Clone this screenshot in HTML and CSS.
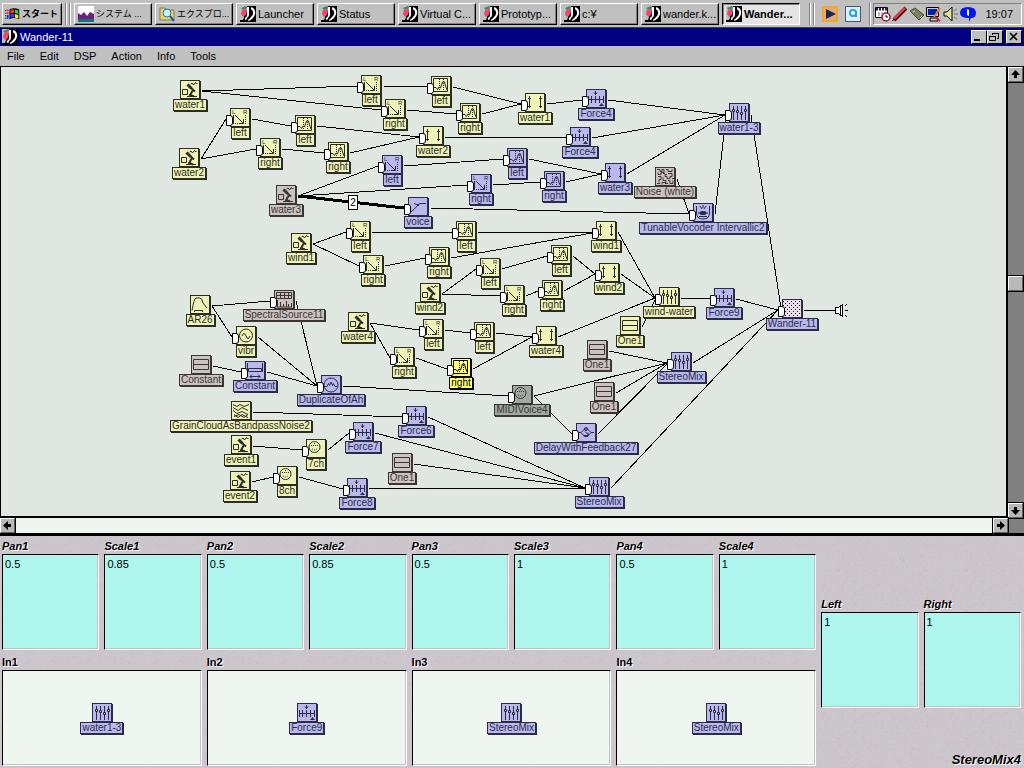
FILE: index.html
```html
<!DOCTYPE html>
<html lang="ja">
<head>
<meta charset="utf-8">
<title>Wander-11</title>
<link rel="stylesheet" href="styles.css">
</head>
<body>
<svg class="defs" aria-hidden="true">
  <defs>
    <symbol id="app" viewBox="0 0 16 16"><path fill="#000" d="M0 0h16v16H0z"/><path fill="#b9c3bd" d="M0 0h7v3L3 14H0z"/><path fill="#41866b" d="M1 2l5-2 2 2-5 2z"/><path fill="#f04468" d="M2 4l4-1 1 2-1 4-3 2-2-3z"/><path d="M11 2q4 2 3 6t-6 6" fill="none" stroke="#fff" stroke-width="2"/><path d="M8 1v8q0 3-3 4" fill="none" stroke="#fff" stroke-width="2"/><path d="M10 2v7q0 3-3 4" fill="none" stroke="#000" stroke-width="2"/></symbol>
    <symbol id="mic" viewBox="0 0 18 17"><path d="M1.500 8.500h5v5h-5zM6 15.500h10M9.500 3l1.500-1 1.500 2 2-2.500 1 1.500 1-1" class="l"/><path d="M6.500 3.500l4 4" class="l w3"/><path d="M10 7l4 3.500M12 9l-3.500 6M9 14l4 1.500" class="l w2"/></symbol>
    <symbol id="pan" viewBox="0 0 18 17"><text x="1" y="5" font-size="6">L</text><text x="12" y="5" font-size="6">R</text><path d="M2.500 6v9M4 6l8 8M12.500 10v4.500H8" class="l"/><path d="M4 14.500h4M14.500 6v9" class="l dot"/></symbol>
    <symbol id="eq" viewBox="0 0 18 17"><path d="M1.500 1.500h14v13h-14zM2 10.500h2l1.500 2L7 10l1.500 1 2-6h2l1 4 1.500 4" class="l"/><path d="M7.500 2v12M11.500 2v12" class="l dot"/></symbol>
    <symbol id="arr" viewBox="0 0 18 17"><path d="M3.500 2v12M14.500 2v12M2 4.500h3M13 4.500h3M2 12.500h3M13 12.500h3" class="l"/></symbol>
    <symbol id="force" viewBox="0 0 18 17"><path d="M8.500 1v4M7 2.500l1.500 2 1.500-2M1 9.500h16M1.500 6v7M4.500 6v7M8.500 6v7M12.500 6v7M16.500 6v7" class="l"/><path d="M12 16l2.500-3 2.500 3z"/></symbol>
    <symbol id="mix" viewBox="0 0 18 17"><path d="M3.500 2v14M7.500 2v14M11.500 2v14M15.500 2v14" class="l"/><path d="M2.500 5.500h2v2h-2zM6.500 6.500h2v2h-2zM10.500 8.500h2v2h-2zM14.500 5.500h2v2h-2z" class="l f"/></symbol>
    <symbol id="voice" viewBox="0 0 18 17"><path d="M1 14.500l4-3 4-4.500 2-1.500h6M5 5.500l5 2" class="l"/><path d="M8 6h2v2H8z"/></symbol>
    <symbol id="noise" viewBox="0 0 18 17"><path d="M1 1.500h3v2h2v-2h2v3H5v2H2v-2M10 1.500h2v2h4v-2M12 5.500h4v3h-2v2h-3v-2H9v-2h2M2 8.500h3v3H3v3M7 9.500v3h3v2H6v2M12 12.500h2v3h3v-3M1 15.500h3M9 15.500h3M16 10.500h2M7 5.500h2" class="l"/></symbol>
    <symbol id="vocoder" viewBox="0 0 18 17"><path d="M2.500 2v7q0 6 6.500 6t6.500-6V2M9 1v3M6 2l2 3M12 2l-2 3M5 12.500h8" class="l"/><ellipse cx="9" cy="9" rx="3.500" ry="2"/><path d="M4 9h10" class="l"/></symbol>
    <symbol id="env" viewBox="0 0 18 17"><path d="M1 14.500q2-12 4-12.500h4q2 0 3 5l4 5M3.500 16v-1.500h8V16" class="l"/></symbol>
    <symbol id="spectral" viewBox="0 0 18 17"><path d="M1.500 1.500h15v6h-15zM2 4.500h14M5.500 2v5M9.500 2v5M13.500 2v5M2.500 9v7M5.500 11v5M8.500 13v3M11.500 10v6M13.500 13v3M16.500 12v4M2 16h15" class="l"/></symbol>
    <symbol id="sine" viewBox="0 0 18 17"><circle cx="9" cy="8.500" r="6.500" class="l"/><path d="M5 9q2-5 4 0t4 0" class="l"/></symbol>
    <symbol id="const" viewBox="0 0 18 17"><path d="M1.500 3.500h15v10h-15zM2 8.500h14" class="l"/></symbol>
    <symbol id="slide" viewBox="0 0 18 17"><path d="M1.500 1v9M16.500 1v9M2.500 6.500h13v3h-13zM4 14.500h10M6 12.500l-2 2 2 2M12 12.500l2 2-2 2" class="l"/></symbol>
    <symbol id="dup" viewBox="0 0 18 17"><circle cx="9" cy="9" r="7" class="l"/><path d="M3 10.500h2l1.500-3 1 2L9 6l1.500 3.500 1-2 1.500 3h2" class="l"/></symbol>
    <symbol id="cloud" viewBox="0 0 18 17"><path d="M1 2.500l4 2 3-2 4 2 5-2M1 5.500l5 3 4-3 6 3M1 8.500l4 3 5-2 6 3M2 12.500l4 3 4-3 6 3M2 14.500l5-2 5 3 4-3" class="l"/></symbol>
    <symbol id="dial" viewBox="0 0 18 17"><circle cx="7.500" cy="7" r="5.500" class="l"/><path d="M4 5.500h8M5 9l2.500 1L10 9M7.500 3v2" class="l dot"/></symbol>
    <symbol id="delay" viewBox="0 0 18 17"><path d="M1 8.500h3l3.500-3.500h3l3.500 3.500h3M4 8.500l3.500 4h3l3.500-4M8 7.500l3 3M7 11.500h4v-3" class="l"/><circle cx="9" cy="5" r="1.500" class="l"/></symbol>
    <symbol id="out" viewBox="0 0 18 17"><path d="M0 0h18v17H0z" fill="#e8dfea"/><path d="M0 1.500h18M0 5.500h18M0 9.500h18M0 13.500h18" class="l chk"/><path d="M2 3.500h18M2 7.500h18M2 11.500h18M2 15.500h18" class="l chk"/></symbol>
  </defs>
</svg>

<header class="taskbar">
  <button class="task start"><svg viewBox="0 0 18 16"><path d="M0 4h4M0 7h4M0 10h4M0 13h4" stroke="#000" stroke-dasharray="1 1"/><path d="M5 3q5-3 11 0v11q-6-3-11 0z"/><path fill="#f33" d="M6 4q2-2 4-1v4H6z"/><path fill="#3c4" d="M11 3l4 1v4l-4-1z"/><path fill="#24f" d="M6 8h4v4H6z"/><path fill="#fe2" d="M11 8l4 1v4l-4-1z"/><path d="M2 4h2M2 7h2" stroke="#f22" stroke-width="2"/><path d="M2 10h2M2 12h2" stroke="#22f" stroke-width="2"/></svg>スタート</button>
  <span class="grip"></span>
  <nav class="tasks" aria-label="タスク">
    <button class="task kana"><svg viewBox="0 0 16 16"><path fill="#fff" d="M0 0h16v16H0z"/><path fill="#70207c" d="M0 7l3 2 3-3 3 4 3-4 4 2v5H0z"/><path fill="#087878" d="M0 13h16v3H0z"/></svg>システム ...</button>
    <button class="task kana"><svg viewBox="0 0 16 16"><path fill="#e8d56b" stroke="#875" d="M1 2h5l2 2h7v10H1z"/><circle cx="8" cy="7" r="4" fill="#bff4fa" stroke="#27a"/><path d="M11 10l4 5" stroke="#14a" stroke-width="2"/></svg>エクスプロ...</button>
    <button class="task"><svg><use href="#app"/></svg>Launcher</button>
    <button class="task"><svg><use href="#app"/></svg>Status</button>
    <button class="task"><svg><use href="#app"/></svg>Virtual C...</button>
    <button class="task"><svg><use href="#app"/></svg>Prototyp...</button>
    <button class="task"><svg><use href="#app"/></svg>c:¥</button>
    <button class="task"><svg><use href="#app"/></svg>wander.k...</button>
    <button class="task active"><svg><use href="#app"/></svg>Wander...</button>
  </nav>
  <span class="grip after"></span>
  <div class="quick">
    <button aria-label="再生"><svg viewBox="0 0 16 16"><path fill="#d8b080" stroke="#f6a623" stroke-width="2" d="M1 1h14v14H1z"/><path fill="#225" d="M4 3l10 5-10 5z"/></svg></button>
    <button aria-label="検索"><svg viewBox="0 0 16 16"><path fill="#d9f0fa" stroke="#456" d="M.5.500h15v15H.5z"/><circle cx="8" cy="7" r="3" fill="#fff" stroke="#28a3dc" stroke-width="2"/><path d="M11 5v6" stroke="#28a3dc" stroke-width="2"/></svg></button>
  </div>
  <span class="grip line"></span>
  <div class="tray">
    <svg viewBox="0 0 16 16"><path fill="#fff" stroke="#000" d="M.5 1.500h12v10H.5z"/><path d="M1 3h11" stroke="#224" stroke-width="3" stroke-dasharray="2 1"/><path d="M3 7h7M3 9h5" stroke="#777" stroke-dasharray="2 1"/><circle cx="11" cy="11" r="4" fill="#fff" stroke="#a01030" stroke-width="1.500"/><path d="M11 9v2h2" stroke="#000" fill="none"/></svg>
    <svg viewBox="0 0 16 16"><path d="M2 14L14 2" stroke="#600" stroke-width="4"/><path d="M2 13L13 2" stroke="#e0405a" stroke-width="2"/><path d="M0 15l3-2" stroke="#000"/></svg>
    <svg viewBox="0 0 16 16"><path fill="#7b8058" stroke="#4a4d30" d="M1 5l5-3 9 7-5 5z"/><path d="M4 6l2-1M11 12l2-2" stroke="#ccc"/></svg>
    <svg viewBox="0 0 16 16"><path fill="#ccc" stroke="#000" d="M.5 1.500h12v9H.5zM4 12h8v3H4z"/><path fill="#0020b0" d="M2 3h9v6H2z"/><path d="M14 2l-6 9" stroke="#e77a20" stroke-width="2"/><path d="M10 12l4 3" stroke="#e22" stroke-width="2"/></svg>
    <svg viewBox="0 0 16 16"><path fill="#e9e08a" stroke="#000" d="M1 6h3l5-5v14l-5-5H1z"/><path d="M11 5l3-2M11 8h4M11 11l3 2" stroke="#777"/></svg>
    <svg viewBox="0 0 16 16"><path fill="#0018e8" d="M8 1q8 0 8 6 0 5-5 5l-2 4v-4Q0 12 0 7q0-6 8-6z"/><path fill="#fff" d="M7 3l2 1v6L7 9z"/></svg>
    <time>19:07</time>
  </div>
</header>

<div class="titlebar">
  <svg><use href="#app"/></svg>
  <h1>Wander-11</h1>
  <div class="winbtns">
    <button aria-label="最小化"><svg viewBox="0 0 12 10"><path d="M2 8h6" stroke="#000" stroke-width="2"/></svg></button><button aria-label="元に戻す"><svg viewBox="0 0 12 10"><path d="M4.500 3V1.500h6v5H9M4 1.500h7" class="k"/><path d="M1.500 4.500h6v4h-6zM1 4.500h7" class="k"/></svg></button><button class="close" aria-label="閉じる"><svg viewBox="0 0 12 10"><path d="M3 1l7 7M10 1L3 8" stroke="#000" stroke-width="1.600"/></svg></button>
  </div>
</div>

<nav class="menubar" aria-label="メニュー">
  <button>File</button><button>Edit</button><button>DSP</button><button>Action</button><button>Info</button><button>Tools</button>
</nav>

<main class="editor">
  <section class="canvas" aria-label="Wander-11">
    <div class="patch">
      <svg class="wires">
        <path d="M202 91L357 86M202 91L381 110M383 86L427 87M407 110L456 114M453 87L521 104M482 114L521 104M547 104L582 100M608 100L725 115M201 159L226 119M201 159L256 149M252 119L291 126M282 149L324 153M317 126L419 137M350 153L419 137M445 137.500L566 138M592 138L725 115M298 196L378 166M298 196L467 185M404 166L503 159M529 159L601 174M493 185L540 182M566 182L601 174M627 174L725 115M430 208L689 214M677 179L689 214M715 214L726 115M751 115L781 308"/>
        <path d="M313 244L346 232M313 244L359 266M372 232.500H452M478 232.500H592M385 266L425 258M451 258L592 233M618 232L655 298M442 294L476 269M442 294L500 296M502 269L547 256M573 256L595 274M526 296L538 291M564 291L595 274M621 274L655 298M370 323L419 330M370 323L390 358M445 330L470 333M496 333L532 337M416 358L447 369M473 369L532 337M558 337L655 298M642 327L655 300M681 298L710 299M736 299L778 310M804 310.500H835"/>
        <path d="M212 306L270 301M212 306L232 337M296 301L317 386M258 337L317 386M213 366L241 372M267 372L317 386M343 386L508 396M534 396L667 363M534 396L572 434M609 351L667 363M616 393L667 363M598 434L667 364M693 363L778 310M253 412L402 417M428 417L585 488M375 433L585 488M414 464L585 488M369 489L585 488M253 446L302 450M328 450L349 433M252 482L273 477M299 477L343 489M611 488L778 310"/>
        <path class="thick" d="M298 196L404 208"/>
        <g><path fill="#fff" d="M835.500 307.500h3l4-3v12l-4-3h-3z"/><path d="M840.500 306v9M845 306l2-2M845 310h3M845 315l2 2"/></g>
      </svg>
      <span class="count">2</span>

      <div class="node" style="left:180px;top:80px"><svg><use href="#mic"/></svg><span>water1</span></div>
      <div class="node in" style="left:230px;top:108px"><svg><use href="#pan"/></svg><span>left</span></div>
      <div class="node in" style="left:260px;top:138px"><svg><use href="#pan"/></svg><span>right</span></div>
      <div class="node in" style="left:295px;top:115px"><svg><use href="#eq"/></svg><span>left</span></div>
      <div class="node in" style="left:328px;top:142px"><svg><use href="#eq"/></svg><span>right</span></div>
      <div class="node" style="left:179px;top:148px"><svg><use href="#mic"/></svg><span>water2</span></div>
      <div class="node gray" style="left:276px;top:185px"><svg><use href="#mic"/></svg><span>water3</span></div>
      <div class="node" style="left:291px;top:233px"><svg><use href="#mic"/></svg><span>wind1</span></div>
      <div class="node in" style="left:361px;top:75px"><svg><use href="#pan"/></svg><span>left</span></div>
      <div class="node in" style="left:385px;top:99px"><svg><use href="#pan"/></svg><span>right</span></div>
      <div class="node in" style="left:431px;top:76px"><svg><use href="#eq"/></svg><span>left</span></div>
      <div class="node in" style="left:460px;top:103px"><svg><use href="#eq"/></svg><span>right</span></div>
      <div class="node in" style="left:525px;top:93px"><svg><use href="#arr"/></svg><span>water1</span></div>
      <div class="node in" style="left:423px;top:126px"><svg><use href="#arr"/></svg><span>water2</span></div>
      <div class="node in blue" style="left:382px;top:155px"><svg><use href="#pan"/></svg><span>left</span></div>
      <div class="node in blue" style="left:507px;top:148px"><svg><use href="#eq"/></svg><span>left</span></div>
      <div class="node in blue" style="left:471px;top:174px"><svg><use href="#pan"/></svg><span>right</span></div>
      <div class="node in blue" style="left:544px;top:171px"><svg><use href="#eq"/></svg><span>right</span></div>
      <div class="node in blue" style="left:408px;top:197px"><svg><use href="#voice"/></svg><span>voice</span></div>
      <div class="node in" style="left:350px;top:221px"><svg><use href="#pan"/></svg><span>left</span></div>
      <div class="node in" style="left:363px;top:255px"><svg><use href="#pan"/></svg><span>right</span></div>
      <div class="node in" style="left:456px;top:221px"><svg><use href="#eq"/></svg><span>left</span></div>
      <div class="node in" style="left:429px;top:247px"><svg><use href="#eq"/></svg><span>right</span></div>
      <div class="node in" style="left:480px;top:258px"><svg><use href="#pan"/></svg><span>left</span></div>
      <div class="node in" style="left:551px;top:245px"><svg><use href="#eq"/></svg><span>left</span></div>
      <div class="node in blue" style="left:586px;top:89px"><svg><use href="#force"/></svg><span>Force4</span></div>
      <div class="node in blue" style="left:570px;top:127px"><svg><use href="#force"/></svg><span>Force4</span></div>
      <div class="node in blue" style="left:605px;top:163px"><svg><use href="#arr"/></svg><span>water3</span></div>
      <div class="node gray" style="left:655px;top:167px"><svg><use href="#noise"/></svg><span>Noise (white)</span></div>
      <div class="node in blue" style="left:693px;top:203px"><svg><use href="#vocoder"/></svg><span>TunableVocoder Intervallic2</span></div>
      <div class="node in blue" style="left:729px;top:103px"><svg><use href="#mix"/></svg><span>water1-3</span></div>
      <div class="node in" style="left:596px;top:221px"><svg><use href="#arr"/></svg><span>wind1</span></div>
      <div class="node" style="left:190px;top:295px"><svg><use href="#env"/></svg><span>AR26</span></div>
      <div class="node in gray" style="left:274px;top:290px"><svg><use href="#spectral"/></svg><span>SpectralSource11</span></div>
      <div class="node in" style="left:236px;top:326px"><svg><use href="#sine"/></svg><span>vibr</span></div>
      <div class="node gray" style="left:191px;top:355px"><svg><use href="#const"/></svg><span>Constant</span></div>
      <div class="node in blue" style="left:245px;top:361px"><svg><use href="#slide"/></svg><span>Constant</span></div>
      <div class="node in blue" style="left:321px;top:375px"><svg><use href="#dup"/></svg><span>DuplicateOfAh</span></div>
      <div class="node" style="left:231px;top:401px"><svg><use href="#cloud"/></svg><span>GrainCloudAsBandpassNoise2</span></div>
      <div class="node" style="left:231px;top:435px"><svg><use href="#mic"/></svg><span>event1</span></div>
      <div class="node in" style="left:306px;top:439px"><svg><use href="#dial"/></svg><span>7ch</span></div>
      <div class="node in blue" style="left:353px;top:422px"><svg><use href="#force"/></svg><span>Force7</span></div>
      <div class="node" style="left:230px;top:471px"><svg><use href="#mic"/></svg><span>event2</span></div>
      <div class="node in" style="left:277px;top:466px"><svg><use href="#dial"/></svg><span>8ch</span></div>
      <div class="node in blue" style="left:347px;top:478px"><svg><use href="#force"/></svg><span>Force8</span></div>
      <div class="node" style="left:348px;top:312px"><svg><use href="#mic"/></svg><span>water4</span></div>
      <div class="node" style="left:420px;top:283px"><svg><use href="#mic"/></svg><span>wind2</span></div>
      <div class="node in" style="left:504px;top:285px"><svg><use href="#pan"/></svg><span>right</span></div>
      <div class="node in" style="left:542px;top:280px"><svg><use href="#eq"/></svg><span>right</span></div>
      <div class="node in" style="left:599px;top:263px"><svg><use href="#arr"/></svg><span>wind2</span></div>
      <div class="node in" style="left:423px;top:319px"><svg><use href="#pan"/></svg><span>left</span></div>
      <div class="node in" style="left:474px;top:322px"><svg><use href="#eq"/></svg><span>left</span></div>
      <div class="node in" style="left:536px;top:326px"><svg><use href="#arr"/></svg><span>water4</span></div>
      <div class="node in" style="left:394px;top:347px"><svg><use href="#pan"/></svg><span>right</span></div>
      <div class="node in selected" style="left:451px;top:358px"><svg><use href="#eq"/></svg><span>right</span></div>
      <div class="node gray" style="left:587px;top:340px"><svg><use href="#const"/></svg><span>One1</span></div>
      <div class="node in dim" style="left:512px;top:385px"><svg><use href="#dial"/></svg><span>MIDIVoice4</span></div>
      <div class="node in" style="left:659px;top:287px"><svg><use href="#mix"/></svg><span>wind-water</span></div>
      <div class="node in blue" style="left:714px;top:288px"><svg><use href="#force"/></svg><span>Force9</span></div>
      <div class="node in blue" style="left:782px;top:299px"><svg><use href="#out"/></svg><span>Wander-11</span></div>
      <div class="node" style="left:620px;top:316px"><svg><use href="#const"/></svg><span>One1</span></div>
      <div class="node gray" style="left:594px;top:382px"><svg><use href="#const"/></svg><span>One1</span></div>
      <div class="node in blue" style="left:671px;top:352px"><svg><use href="#mix"/></svg><span>StereoMix</span></div>
      <div class="node in blue" style="left:406px;top:406px"><svg><use href="#force"/></svg><span>Force6</span></div>
      <div class="node gray" style="left:392px;top:453px"><svg><use href="#const"/></svg><span>One1</span></div>
      <div class="node in blue" style="left:576px;top:423px"><svg><use href="#delay"/></svg><span>DelayWithFeedback27</span></div>
      <div class="node in blue" style="left:589px;top:477px"><svg><use href="#mix"/></svg><span>StereoMix</span></div>
    </div>
  </section>
  <div class="vscroll">
    <button aria-label="上"><svg viewBox="0 0 9 9"><path d="M4.500 0L9 5H6v3H3V5H0z"/></svg></button>
    <span class="track"></span><span class="thumb"></span><span class="track"></span>
    <button aria-label="下"><svg viewBox="0 0 9 9"><path d="M4.500 9L9 4H6V1H3v3H0z"/></svg></button>
  </div>
  <div class="hscroll">
    <button aria-label="左"><svg viewBox="0 0 9 9"><path d="M0 4.500L5 0v3h3v3H5v3z"/></svg></button>
    <span class="bar"></span>
    <button aria-label="右"><svg viewBox="0 0 9 9"><path d="M9 4.500L4 0v3H1v3h3v3z"/></svg></button>
  </div>
  <span class="corner"></span>
</main>

<section class="params" aria-label="StereoMix4">
  <div class="field"><label for="pan1">Pan1</label><textarea id="pan1">0.5</textarea></div>
  <div class="field"><label for="scale1">Scale1</label><textarea id="scale1">0.85</textarea></div>
  <div class="field"><label for="pan2">Pan2</label><textarea id="pan2">0.5</textarea></div>
  <div class="field"><label for="scale2">Scale2</label><textarea id="scale2">0.85</textarea></div>
  <div class="field"><label for="pan3">Pan3</label><textarea id="pan3">0.5</textarea></div>
  <div class="field"><label for="scale3">Scale3</label><textarea id="scale3">1</textarea></div>
  <div class="field"><label for="pan4">Pan4</label><textarea id="pan4">0.5</textarea></div>
  <div class="field"><label for="scale4">Scale4</label><textarea id="scale4">1</textarea></div>
  <div class="field mid"><label for="left">Left</label><textarea id="left">1</textarea></div>
  <div class="field mid"><label for="right">Right</label><textarea id="right">1</textarea></div>
  <div class="field input"><h2>In1</h2><div class="slot"><div class="node blue"><svg><use href="#mix"/></svg><span>water1-3</span></div></div></div>
  <div class="field input"><h2>In2</h2><div class="slot"><div class="node blue"><svg><use href="#force"/></svg><span>Force9</span></div></div></div>
  <div class="field input"><h2>In3</h2><div class="slot"><div class="node blue"><svg><use href="#mix"/></svg><span>StereoMix</span></div></div></div>
  <div class="field input"><h2>In4</h2><div class="slot"><div class="node blue"><svg><use href="#mix"/></svg><span>StereoMix</span></div></div></div>
  <p class="name">StereoMix4</p>
</section>
</body>
</html>
```
FILE: styles.css
```css
* { box-sizing: border-box; }

body {
  margin: 0;
  min-height: 100vh;
  display: flex;
  flex-direction: column;
  background: #c0c0c0;
  color: #000;
  font: 11px/16px "Liberation Sans", "Noto Sans CJK JP", sans-serif;
}

button { font: inherit; color: inherit; padding: 0; border: 0; background: none; }
h1, h2, p { margin: 0; font-size: inherit; }
.defs { position: absolute; width: 0; height: 0; }

/* symbol strokes */
.l { fill: none; stroke: currentColor; stroke-width: 1; }
.w2 { stroke-width: 2; }
.w3 { stroke-width: 3; }
.f { fill: #d0d0d8; }
.dot { stroke-dasharray: 1 1; }
.chk { stroke: #112; stroke-dasharray: 1 3; }
.k { fill: none; stroke: #000; stroke-width: 1; }

/* taskbar */
.taskbar {
  display: flex;
  align-items: center;
  height: 28px;
  padding: 0 2px;
  border-bottom: 1px solid #404040;
}
.task {
  display: flex;
  align-items: center;
  gap: 2px;
  height: 22px;
  padding: 0 0 0 3px;
  white-space: nowrap;
  border: 1px solid;
  border-color: #fff #000 #000 #fff;
  box-shadow: inset -1px -1px #808080;
}
.task svg { width: 16px; height: 16px; flex: none; }
.start { flex: none; gap: 1px; width: 60px; padding-left: 2px; font-size: 9px; font-weight: 700; }
.kana { font-size: 9px; }
.tasks { display: flex; flex: 0 1 726px; gap: 3px; min-width: 0; }
.tasks .task { flex: 1 1 0; min-width: 0; }
.task.active {
  font-weight: 700;
  background: #e4e4e4;
  border-color: #000 #fff #fff #000;
  box-shadow: inset 1px 1px #808080;
}
.grip { flex: none; width: 5px; height: 22px; margin: 0 4px 0 3px; border: solid #808080; border-width: 0 1px; box-shadow: inset 1px 0 #fff, 1px 0 #fff; }
.grip.after { margin: 0 4px 0 9px; }
.grip.line { width: 2px; border-width: 0 0 0 1px; box-shadow: inset 1px 0 #fff; margin: 0 2px 0 4px; }
.quick { display: flex; gap: 7px; margin: 0 4px; }
.quick svg { display: block; width: 16px; height: 16px; }
.tray {
  display: flex;
  align-items: center;
  flex: 1;
  gap: 1px;
  height: 22px;
  padding-left: 1px;
  border: 1px solid;
  border-color: #808080 #fff #fff #808080;
  min-width: 0;
}
.tray svg { width: 16px; height: 16px; flex: none; }
.tray time { margin-left: auto; padding-right: 8px; }

/* window frame */
.titlebar {
  display: flex;
  align-items: center;
  height: 18px;
  padding: 0 2px;
  gap: 2px;
  background: #000080;
  color: #fff;
}
.titlebar > svg { width: 16px; height: 16px; }
h1 { flex: 1; font-weight: 400; }
.winbtns { display: flex; }
.winbtns button {
  width: 16px;
  height: 14px;
  background: #c0c0c0;
  border: 1px solid;
  border-color: #fff #000 #000 #fff;
}
.winbtns .close { margin-left: 3px; }
.winbtns svg { display: block; width: 12px; height: 10px; }
.menubar { display: flex; gap: 15px; height: 20px; padding: 0 7px; align-items: center; }

/* editor */
.editor {
  flex: 1;
  display: grid;
  grid-template: minmax(452px, 1fr) 15px / 1fr 16px;
  border-bottom: 3px solid #000;
}
.canvas {
  position: relative;
  overflow: hidden;
  background: #e0e6e0;
  border: solid #000;
  border-width: 1px 2px 2px 1px;
}
/* diagram coordinates are measured from the top of the window */
.patch { position: absolute; inset: -67px 0 0 -1px; }
.wires { position: absolute; inset: 0; width: 100%; height: 100%; fill: none; stroke: #000; stroke-width: 1; shape-rendering: crispEdges; }
.wires .thick { stroke-width: 3; }
.count {
  position: absolute;
  left: 348px;
  top: 195px;
  width: 10px;
  height: 15px;
  border: 1px solid #000;
  background: #fff;
  font-size: 10px;
  line-height: 13px;
  text-align: center;
}
.node {
  --fill: #edf3b9;
  --ink: #2c2d22;
  display: flex;
  flex-direction: column;
  align-items: center;
  width: 20px;
  color: var(--ink);
}
.patch .node { position: absolute; }
.node svg {
  flex: none;
  width: 20px;
  height: 19px;
  border: 1px solid var(--ink);
  background: var(--fill);
  box-shadow: 1px 1px var(--ink);
  fill: currentColor;
}
.node span {
  min-width: 19px;
  padding: 0 1px;
  border: 1px solid var(--ink);
  background: var(--fill);
  box-shadow: 1px 1px var(--ink);
  font-size: 10px;
  line-height: 10px;
  text-align: center;
  white-space: nowrap;
  position: relative;
}
.in::before {
  content: "";
  position: absolute;
  left: -4px;
  top: 7px;
  width: 5px;
  height: 9px;
  background: #fff;
  border: 1px solid #000;
  border-radius: 0 3px 3px 0;
}
.blue { --fill: #b9b9ee; --ink: #2b2b48; }
.gray { --fill: #cbc3c0; --ink: #3a3533; }
.dim { --fill: #a2a8a2; --ink: #343834; }
.selected { --fill: #ffff73; --ink: #000; }

/* scroll bars */
.vscroll { display: flex; flex-direction: column; background: #808080; border-top: 1px solid #000; }
.vscroll .track { flex: 194 1 0; }
.vscroll .track ~ .track { flex-grow: 212; }
.vscroll button, .hscroll button, .thumb {
  flex: none;
  display: grid;
  place-items: center;
  width: 15px;
  height: 15px;
  background: #b8b8b8;
  border: 1px solid;
  border-color: #fff #606060 #606060 #fff;
  outline: 1px solid #000;
  outline-offset: 0;
}
.vscroll svg, .hscroll svg { width: 9px; height: 9px; }
.hscroll { display: flex; background: #eff6ef; }
.hscroll .bar { flex: 1; }
.corner { background: #808080; border-top: 1px solid #000; border-left: 1px solid #000; }

/* parameter panel */
.params {
  display: grid;
  grid-template-columns: repeat(10, 1fr);
  grid-template-rows: repeat(4, 58px);
  column-gap: 5px;
  padding: 0 3px 0 2px;
  background: #cec8ce url("data:image/svg+xml,%3Csvg xmlns='http://www.w3.org/2000/svg' width='128' height='128'%3E%3Cfilter id='n'%3E%3CfeTurbulence baseFrequency='.3' numOctaves='3' stitchTiles='stitch'/%3E%3CfeColorMatrix type='saturate' values='0'/%3E%3C/filter%3E%3Crect width='128' height='128' filter='url(%23n)' opacity='.12'/%3E%3C/svg%3E");
}
.field { display: flex; flex-direction: column; grid-row: 1 / span 2; padding: 3px 0 2px; min-width: 0; }
.field label, .field h2 {
  font-size: 11px;
  line-height: 15px;
  font-weight: 700;
  text-shadow: 1px 1px #fff;
}
.field label { font-style: italic; }
.field.mid { grid-row: 2 / span 2; }
.field.input { grid-row: 3 / span 2; grid-column-end: span 2; }
.field textarea, .slot {
  flex: 1;
  width: 100%;
  min-height: 0;
  margin: 0;
  border: 1px solid;
  border-color: #000 #fff #fff #000;
  box-shadow: inset -1px -1px #c4c4c4;
}
.field textarea {
  display: block;
  padding: 2px 2px;
  resize: none;
  border-radius: 0;
  background: #aef6ee;
  font: 11px/15px "Liberation Sans", sans-serif;
}
.slot { display: grid; place-items: center; background: #eff6ef; }
.name {
  grid-area: 4 / 9 / 5 / 11;
  align-self: end;
  justify-self: end;
  font-size: 13px;
  font-style: italic;
  font-weight: 700;
  text-shadow: 1px 1px #fff;
}
```
